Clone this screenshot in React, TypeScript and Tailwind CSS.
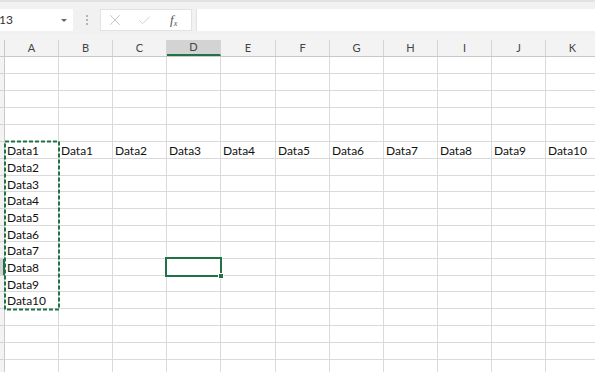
import { X, Check } from "lucide-react";

type Col = { label: string; w: string };

const cols: Col[] = [
  { label: "A", w: "w-[54px]" },
  { label: "B", w: "w-[54px]" },
  { label: "C", w: "w-[54px]" },
  { label: "D", w: "w-[54px]" },
  { label: "E", w: "w-[55px]" },
  { label: "F", w: "w-[54px]" },
  { label: "G", w: "w-[54px]" },
  { label: "H", w: "w-[54px]" },
  { label: "I", w: "w-[54px]" },
  { label: "J", w: "w-[54px]" },
  { label: "K", w: "w-[54px]" },
];

// row heights in px, matching excel's ~16.7px rhythm at this zoom
type Row = { h: string; cells: string[]; active?: boolean };

const tall = "h-[17px]";
const short = "h-[16px]";

const rows: Row[] = [
  { h: tall, cells: [] },
  { h: tall, cells: [] },
  { h: tall, cells: [] },
  { h: tall, cells: [] },
  { h: tall, cells: [] },
  {
    h: tall,
    cells: ["Data1", "Data1", "Data2", "Data3", "Data4", "Data5", "Data6", "Data7", "Data8", "Data9", "Data10"],
  },
  { h: tall, cells: ["Data2"] },
  { h: short, cells: ["Data3"] },
  { h: tall, cells: ["Data4"] },
  { h: tall, cells: ["Data5"] },
  { h: short, cells: ["Data6"] },
  { h: tall, cells: ["Data7"] },
  { h: tall, cells: ["Data8"], active: true },
  { h: short, cells: ["Data9"] },
  { h: tall, cells: ["Data10"] },
  { h: tall, cells: [] },
  { h: tall, cells: [] },
  { h: tall, cells: [] },
  { h: tall, cells: [] },
];

function Toolbar() {
  return (
    <div className="h-[35px] bg-[#f1f1f1] border-t-2 border-[#e2e2e2] flex items-start pt-[7px] shrink-0">
      <div className="w-[73px] h-[22px] bg-white flex items-center justify-between pr-[6px] text-[12px] text-[#333]">
        <span className="-ml-[1px]">13</span>
        <span className="w-0 h-0 border-l-[3px] border-r-[3px] border-t-[3px] border-l-transparent border-r-transparent border-t-[#666]" />
      </div>
      <div className="w-[27px] h-[22px] flex flex-col items-center justify-center gap-[2px]">
        <span className="w-[2px] h-[2px] bg-[#b4b4b4]" />
        <span className="w-[2px] h-[2px] bg-[#b4b4b4]" />
        <span className="w-[2px] h-[2px] bg-[#b4b4b4]" />
      </div>
      <div className="w-[92px] h-[22px] bg-white border border-[#e2e2e2] flex items-center text-[#b4b4b4]">
        <X size={18} strokeWidth={1} className="ml-[5px]" />
        <Check size={15} strokeWidth={1.2} className="ml-[13px] text-[#c4c4c4]" />
        <span className="ml-[18px] text-[13px] italic text-[#555] font-['Liberation_Serif',serif]">
          f<sub className="text-[8px]">x</sub>
        </span>
      </div>
      <div className="ml-[4px] flex-1 h-[22px] bg-white border-l border-[#e2e2e2]" />
    </div>
  );
}

function HeaderRow() {
  return (
    <div className="flex h-[22px] bg-[#f3f3f3] border-b border-[#c9c9c9] items-end shrink-0">
      <div className="w-[5px] h-[16px] border-r border-[#c9c9c9] shrink-0" />
      {cols.map((c) => (
        <div
          key={c.label}
          className={`${c.w} h-[16px] shrink-0 flex items-center justify-center text-[11px] text-[#444] border-r border-[#d4d4d4] ${
            c.label === "D" ? "bg-[#d3d3d3] border-b-2 border-b-[#217346] text-[#2d5a3c]" : ""
          }`}
        >
          {c.label}
        </div>
      ))}
    </div>
  );
}

export default function App() {
  return (
    <div className="w-[595px] h-[372px] overflow-hidden bg-white relative flex flex-col font-['Lato',sans-serif]">
      <Toolbar />
      <HeaderRow />
      <div className="flex flex-col">
        {rows.map((r, i) => (
          <div key={i} className={`flex ${r.h} shrink-0`}>
            <div
              className={`w-[5px] shrink-0 border-b border-[#d4d4d4] ${
                r.active ? "bg-[#d3d3d3] border-r-2 border-r-[#217346]" : "bg-[#f3f3f3] border-r border-r-[#c9c9c9]"
              }`}
            />
            {cols.map((c, j) => (
              <div
                key={c.label}
                className={`${c.w} shrink-0 border-r border-b border-[#dadada] pl-[2px] pt-[1px] text-[12px] leading-[16px] text-[#111] whitespace-nowrap overflow-hidden`}
              >
                {r.cells[j] ?? ""}
              </div>
            ))}
          </div>
        ))}
      </div>

      {/* copy marquee around A6:A15 */}
      <svg className="absolute left-[4px] top-[140px]" width="56" height="171">
        <rect x="1" y="1.5" width="54" height="168" fill="none" stroke="#217346" strokeWidth="2" strokeDasharray="4 2" />
      </svg>

      {/* active cell D13 */}
      <div className="absolute left-[165px] top-[257px] w-[57px] h-[20px] border-2 border-[#217346]" />
      <div className="absolute left-[218px] top-[273px] w-[6px] h-[6px] bg-[#217346] border border-white" />
    </div>
  );
}
